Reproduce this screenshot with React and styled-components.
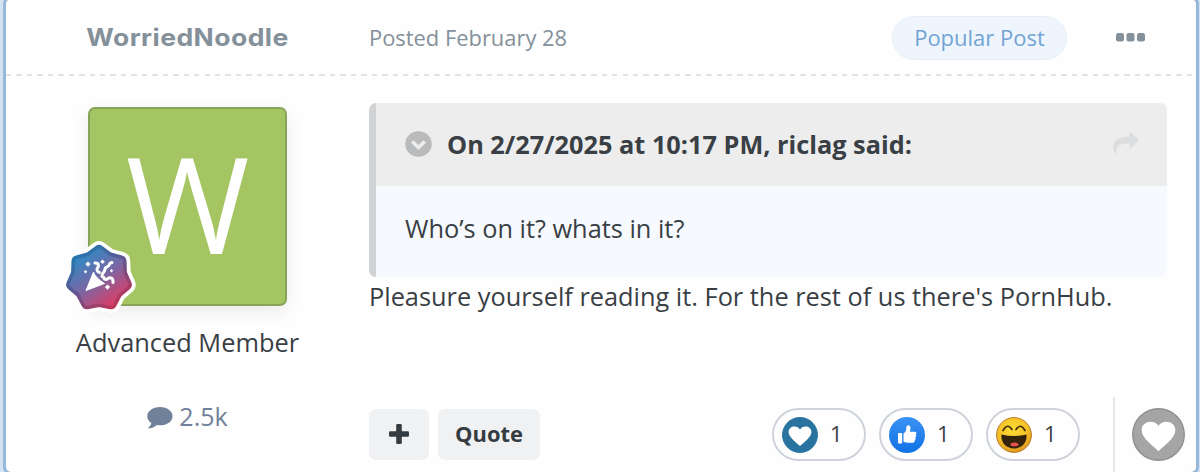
import React from "react";
import styled, { createGlobalStyle } from "styled-components";

const GlobalStyle = createGlobalStyle`
*, *::before, *::after{
    box-sizing: border-box;
}
body{
    margin: 0;
    overflow: hidden;
    background-color: #d3e3f4;
    font-family: "Open Sans", "Noto Sans", sans-serif;
    color: #393f44;
}
`

const Page = styled.div`
height: 472px;
overflow: hidden;
`

const Post = styled.article`
width: 1196px;
height: 479px;
margin: -4px 0 0 3px;
border: 3px solid #98b8da;
border-radius: 8px;
background-color: #fefefe;
display: flex;
flex-direction: column;
`

const Header = styled.header`
height: 77px;
flex: none;
padding: 0 51px 0 0;
display: flex;
align-items: center;
background: repeating-linear-gradient(90deg, #e2e3e5 0 5.4px, transparent 5.4px 10.45px) 0 100% / 100% 2px no-repeat;
`

const Author = styled.h3`
width: 363px;
margin: 0;
text-align: center;
font-family: Inter, sans-serif;
font-weight: 700;
font-size: 24px;
line-height: 30px;
letter-spacing: 0.4px;
transform: scaleX(1.105);
color: #84909a;
`

const Posted = styled.time`
flex: 1;
font-size: 21.9px;
line-height: 30px;
color: #84909a;
`

const Popular = styled.span`
width: 175px;
height: 44px;
margin-right: 49px;
border: 1px solid #e6eff8;
border-radius: 22px;
background-color: #eff5fc;
color: #73a4d4;
font-size: 22px;
line-height: 41px;
text-align: center;
`

const Body = styled.div`
flex: 1;
display: flex;
`

const Aside = styled.aside`
width: 363px;
padding-top: 31px;
display: flex;
flex-direction: column;
align-items: center;
`

const Avatar = styled.div`
position: relative;
width: 199px;
height: 199px;
padding-bottom: 8px;
border: 2px solid #88a35a;
border-radius: 7px;
background-color: #a5c563;
box-shadow: 0 6px 18px rgba(0, 0, 0, 0.08);
display: flex;
justify-content: center;
align-items: center;
font-size: 134px;
line-height: 187px;
color: #fff;
`

const Rank = styled.div`
position: absolute;
left: -30px;
bottom: -13px;
width: 78px;
height: 78px;
display: flex;
`

const Group = styled.div`
margin-top: 18px;
font-size: 25.4px;
line-height: 36px;
`

const Count = styled.div`
margin-top: 38px;
display: flex;
align-items: center;
gap: 6px;
font-size: 25px;
line-height: 36px;
color: #71819a;

svg{
    margin-top: 3px;
}
`

const Main = styled.main`
flex: 1;
padding-top: 27px;
display: flex;
flex-direction: column;
`

const Quote = styled.blockquote`
width: 798px;
height: 174px;
margin: 0;
border-left: 7px solid #d0d2d4;
border-radius: 7px;
overflow: hidden;
background-color: #f6fafe;
`

const Citation = styled.div`
height: 83px;
padding: 0 28px 2px 29px;
display: flex;
align-items: center;
background-color: #ededed;
font-size: 25.3px;
font-weight: 700;

span{
    flex: 1;
    margin-left: 15px;
}
`

const QuoteText = styled.p`
margin: 0;
padding: 24px 29px;
font-size: 25.35px;
line-height: 36px;
`

const Text = styled.p`
margin: 1px 0 0;
font-size: 25.35px;
line-height: 36px;
white-space: nowrap;
`

const Footer = styled.footer`
margin-top: 83px;
height: 78px;
display: flex;
align-items: flex-start;
`

const Button = styled.button`
width: ${props => props.$width};
height: 51px;
margin: 12px 9px 0 0;
padding: 0 0 2px;
border: none;
border-radius: 7px;
background-color: #f0f1f3;
color: #353c41;
font: 700 21.9px "Open Sans", "Noto Sans", sans-serif;
display: flex;
justify-content: center;
align-items: center;
`

const Reactions = styled.div`
margin: 11px 33px 0 auto;
display: flex;
gap: 13px;
`

const Reaction = styled.div`
width: 94px;
height: 53px;
padding: 0 0 0 8px;
border: 2px solid #ced3db;
border-radius: 27px;
display: flex;
align-items: center;
font-size: 22px;

span{
    margin-left: 12px;
    padding-bottom: 4px;
}
`

const Divider = styled.div`
width: 83px;
height: 78px;
padding: 11px 0 0 17px;
border-left: 2px solid #e8e9ec;
`

// seven soft corners: the dips are the path nodes, the tips are curve controls
const corner = (i, r) => {
  const a = (i * Math.PI) / 7 - Math.PI / 2;
  return [39 + r * Math.cos(a), 39.5 + r * Math.sin(a)];
}
const badgePath = Array.from({ length: 7 }, (_, k) => {
  const i = k * 2;
  const dip = corner(i - 1, 26.8);
  const tip = corner(i, 32.8);
  const next = corner(i + 1, 26.8);
  const mix = (a, b, t) => [a[0] + (b[0] - a[0]) * t, a[1] + (b[1] - a[1]) * t];
  return `${k ? "L" : "M"}${dip} L${mix(dip, tip, 0.78)} Q${tip} ${mix(next, tip, 0.78)} L${next}`;
}).join(" ") + "Z";

const BadgeIcon = () => (
  <svg width="78" height="78" viewBox="0 0 78 78" strokeLinejoin="round">
    <defs>
      <linearGradient id="rank" x1="0.2" y1="0.1" x2="0.8" y2="0.95">
        <stop offset="0" stopColor="#2b8bc6" />
        <stop offset="0.5" stopColor="#7967a4" />
        <stop offset="1" stopColor="#e33b62" />
      </linearGradient>
      <linearGradient id="rankEdge" x1="0.2" y1="0.1" x2="0.8" y2="0.95">
        <stop offset="0" stopColor="#2776ae" />
        <stop offset="0.5" stopColor="#67538e" />
        <stop offset="1" stopColor="#bd3659" />
      </linearGradient>
    </defs>
    <path d={badgePath} fill="#fff" stroke="#fff" strokeWidth="11" />
    <path d={badgePath} fill="url(#rank)" stroke="url(#rankEdge)" strokeWidth="3.600" />
    <path d="M26 51.500L33.500 33Q35 38.500 44.500 44.500Z" fill="#fff" strokeWidth="1" stroke="#fff" />
    <g fill="none" stroke="#fff" strokeWidth="3" strokeLinecap="round">
      <path d="M35 24c4-.5 4 3 2.500 5s0 4 2 4.500" />
      <path d="M52 23.500c-3.500 0-2 4-5 4.500s-1.500 4-3.500 5.500-1.500 3-1.500 4" />
      <path d="M53 43.500c.5-5-3-5.500-5-4s-4.500 1-4-1" />
    </g>
    <g fill="#fff">
      <path d="M28 22.500l2.600 2.600L28 27.700l-2.600-2.600z" />
      <path d="M42.500 20.500l2.300 2.300-2.300 2.300-2.300-2.300z" />
      <path d="M25.500 31l1.700 1.700-1.700 1.700-1.700-1.700z" />
      <path d="M51.500 30l1.700 1.700-1.700 1.700-1.700-1.700z" />
      <path d="M47.500 45.500l2.600 2.600-2.600 2.600-2.600-2.600z" />
    </g>
  </svg>
)

const HeartIcon = ({ size, bg, edge, d }) => (
  <svg width={size} height={size} viewBox="0 0 52 52">
    <circle cx="26" cy="26" r="25.3" fill={bg} stroke={edge} strokeWidth="1.3" />
    <path d={d} fill="#fff" />
  </svg>
)

const ThumbIcon = () => (
  <svg width="36" height="36" viewBox="0 0 36 36">
    <defs>
      <linearGradient id="thumb" x1="0" y1="0" x2="0" y2="1">
        <stop offset="0" stopColor="#3a92f5" />
        <stop offset="1" stopColor="#1272e4" />
      </linearGradient>
    </defs>
    <circle cx="18" cy="18" r="18" fill="url(#thumb)" />
    <rect x="9" y="16" width="4.2" height="10.5" rx="0.8" fill="#fff" />
    <path d="M14.500 16.500c2-1.200 2.700-3.300 2.800-5.600.1-3.800 4.400-3.300 4.200.5-.1 1.400-.5 2.400-.8 3.300h5c1.900 0 2.400 2 .9 2.900.9.800.8 2.200-.3 2.800.7.900.4 2.200-.6 2.700.4 1.500-.5 2.700-2 2.700h-5.200c-1.800 0-2.800-.8-4-1z" fill="#fff" />
  </svg>
)

const LaughIcon = () => (
  <svg width="36" height="36" viewBox="0 0 36 36">
    <defs>
      <radialGradient id="laugh" cx="0.45" cy="0.35" r="0.65">
        <stop offset="0" stopColor="#fddd35" />
        <stop offset="0.7" stopColor="#f4bd25" />
        <stop offset="1" stopColor="#dd961f" />
      </radialGradient>
    </defs>
    <circle cx="18" cy="18" r="17.4" fill="url(#laugh)" stroke="#b57b25" strokeWidth="1" />
    <g fill="none" stroke="#44300b" strokeWidth="1.7" strokeLinecap="round">
      <path d="M7 13.500Q11.500 5.500 16 12.500" />
      <path d="M20 12.500Q24.500 5.500 29 13.500" />
    </g>
    <path d="M5.500 17.500Q18 20.500 30.500 17.500C31.500 26 25.500 31.500 18 31.500S4.500 26 5.500 17.500Z" fill="#33230c" />
    <ellipse cx="18.500" cy="27.500" rx="4" ry="1.900" fill="#e94e50" />
  </svg>
)

const App = () => {

  return (
    <Page>
      <GlobalStyle />
      <Post>
        <Header>
          <Author>WorriedNoodle</Author>
          <Posted>Posted February 28</Posted>
          <Popular>Popular Post</Popular>
          <svg width="29" height="9" viewBox="0 0 29 9" fill="#84909a">
            <rect width="8" height="8.500" rx="2.200" />
            <rect x="10.500" width="8" height="8.500" rx="2.200" />
            <rect x="21" width="8" height="8.500" rx="2.200" />
          </svg>
        </Header>
        <Body>
          <Aside>
            <Avatar>
              W
              <Rank>
                <BadgeIcon />
              </Rank>
            </Avatar>
            <Group>Advanced Member</Group>
            <Count>
              <svg width="26" height="22" viewBox="0 0 26 22" fill="#71819a">
                <path d="M13 0C20 0 25.500 4 25.500 9.200S20 18.300 13 18.300c-1 0-2-.1-3-.3C7.500 20 4.800 21.200 2 21.500c-.6 0-.9-.6-.4-1C3 19.300 4 18 4.400 16 1.700 14.400.3 12 .3 9.200.3 4 6 0 13 0z" />
              </svg>
              2.5k
            </Count>
          </Aside>
          <Main>
            <Quote>
              <Citation>
                <svg width="27" height="26" viewBox="0 0 27 26">
                  <ellipse cx="13.500" cy="13" rx="13.300" ry="12.800" fill="#b9babb" />
                  <path d="M7.200 10.500l6.300 6 6.300-6" fill="none" stroke="#ededed" strokeWidth="3.600" />
                </svg>
                <span>On 2/27/2025 at 10:17 PM, riclag said:</span>
                <svg width="26" height="23" viewBox="0 0 26 23" fill="#dcddde">
                  <path d="M16.500.6c0-.7.7-.9 1.200-.4l7.700 7.300c.4.400.4 1 0 1.400l-7.700 7.300c-.5.500-1.200.2-1.200-.5v-3.900c-8 0-14 .4-13.200 10.200.1.600-.5.800-.8.200C-2.500 13 .5 4.500 16.500 4.500z" />
                </svg>
              </Citation>
              <QuoteText>Who’s on it? whats in it?</QuoteText>
            </Quote>
            <Text>Pleasure yourself reading it. For the rest of us there's PornHub.</Text>
            <Footer>
              <Button $width="60px">
                <svg width="20" height="20" viewBox="0 0 20 20" fill="#353c41">
                  <rect x="7.200" width="5.600" height="20" rx="1.300" />
                  <rect y="7.200" width="20" height="5.600" rx="1.300" />
                </svg>
              </Button>
              <Button $width="102px">Quote</Button>
              <Reactions>
                <Reaction>
                  <HeartIcon size={36} bg="#28739f" edge="#28739f" d="M26 42C21 37 9.500 29 9.500 22c0-9.500 12.500-11 16.500-4 4-7 16.500-5.500 16.500 4 0 7-11.500 15-16.500 20z" />
                  <span>1</span>
                </Reaction>
                <Reaction>
                  <ThumbIcon />
                  <span>1</span>
                </Reaction>
                <Reaction>
                  <LaughIcon />
                  <span>1</span>
                </Reaction>
              </Reactions>
              <Divider>
                <HeartIcon size={53} bg="#a5a5a5" edge="#8d8d8d" d="M26 42.500C21.500 37.500 9.500 29.500 9.500 22c0-9.500 12.500-11 16.500-4.500 4-6.500 16.500-5 16.500 4.500 0 7.500-12 15.500-16.500 20.500z" />
              </Divider>
            </Footer>
          </Main>
        </Body>
      </Post>
    </Page>
  )
}

export default App;
